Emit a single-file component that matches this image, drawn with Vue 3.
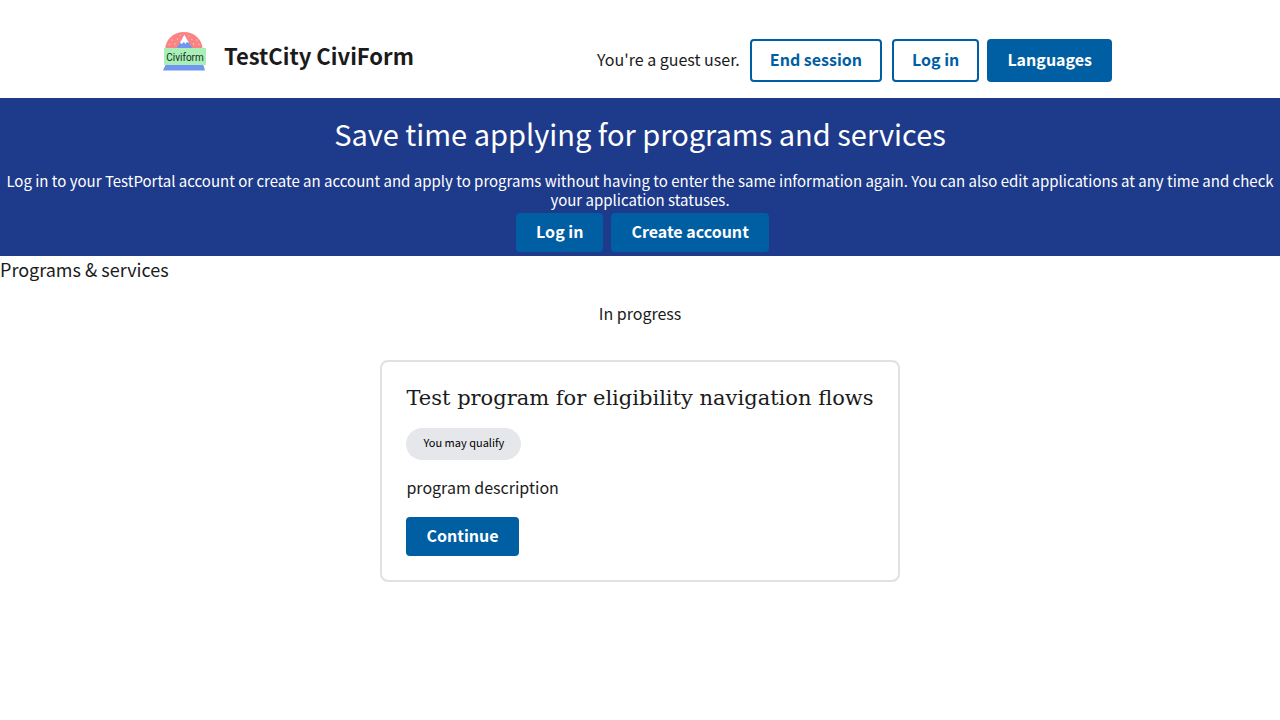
<script setup>
const programs = [
  {
    title: 'Test program for eligibility navigation flows',
    tag: 'You may qualify',
    description: 'program description',
  },
]
</script>

<template>
  <div class="page">
    <header class="header">
      <div class="brand">
        <svg class="logo" viewBox="0 0 44 40" role="img" aria-label="Civiform">
          <path d="M2.3 17a18.6 17 0 0 1 37.2 0z" fill="#fb8383" />
          <g fill="#fdcaca">
            <circle cx="6.5" cy="12.5" r=".7" />
            <circle cx="9" cy="8" r=".7" />
            <circle cx="12" cy="12" r=".7" />
            <circle cx="14.5" cy="7" r=".7" />
            <circle cx="17" cy="3.5" r=".6" />
            <circle cx="26" cy="4" r=".6" />
            <circle cx="29" cy="7.5" r=".7" />
            <circle cx="30.500" cy="12" r=".7" />
            <circle cx="34" cy="8" r=".7" />
            <circle cx="36" cy="12.5" r=".7" />
          </g>
          <path d="M13 17 21.3 3.5 30 17z" fill="#7096ef" />
          <path d="m21.3 2.7 4.7 8-2.200-.7-1.300 2-1.700-2-2 2-1.800-1.300z" fill="#fff" />
          <path d="M3 32h37l2 6.5H0z" fill="#7096ef" />
          <rect x="1" y="16" width="42" height="17" fill="#a8f0b8" />
          <text x="22" y="29" text-anchor="middle">Civiform</text>
        </svg>
        <span class="name">TestCity CiviForm</span>
      </div>
      <nav class="account" aria-label="Account">
        <span class="guest">You're a guest user.</span>
        <a class="button outline" href="#">End session</a>
        <div class="actions">
          <a class="button outline" href="#">Log in</a>
          <button class="button tall" type="button">Languages</button>
        </div>
      </nav>
    </header>

    <section class="banner">
      <h1>Save time applying for programs and services</h1>
      <p>
        Log in to your TestPortal account or create an account and apply to programs without having to enter the same information again. You can also edit applications at any time and check your application statuses.
      </p>
      <div class="actions centered">
        <button class="button" type="button">Log in</button>
        <button class="button" type="button">Create account</button>
      </div>
    </section>

    <main>
      <h2 class="section-title">Programs &amp; services</h2>
      <h3 class="group-title">In progress</h3>
      <ul class="cards">
        <li v-for="program in programs" :key="program.title" class="card">
          <h4>{{ program.title }}</h4>
          <span class="tag">{{ program.tag }}</span>
          <p>{{ program.description }}</p>
          <a class="button" href="#">Continue</a>
        </li>
      </ul>
    </main>
  </div>
</template>

<style>
body {
  margin: 0;
  background: #fff;
}
</style>

<style scoped>
.page {
  color: #1b1b1b;
  font-family: "Noto Sans CJK SC", "Noto Sans", sans-serif;
  font-size: 16px;
  line-height: 20px;
}
h1, h2, h3, h4, p, ul {
  margin: 0;
  padding: 0;
  font-weight: 400;
}
.header {
  box-sizing: border-box;
  display: flex;
  justify-content: space-between;
  align-items: flex-start;
  max-width: 1024px;
  margin: 0 auto;
  padding: 32px 40px 16px 35px;
}
.brand {
  display: flex;
  align-items: flex-start;
  gap: 17px;
}
.logo {
  width: 44px;
  height: 40px;
}
.logo text {
  font-family: Roboto, sans-serif;
  font-size: 10px;
  fill: #172a1c;
}
.name {
  padding-top: 8px;
  font-size: 22px;
  font-weight: 700;
  line-height: 30px;
}
.account {
  display: flex;
  align-items: center;
  gap: 10px;
  padding-top: 7px;
}
.guest {
  padding-bottom: 4px;
}
.actions {
  display: flex;
  gap: 8px;
}
.centered {
  justify-content: center;
  padding: 4px 0 4px 5px;
}
.button {
  box-sizing: border-box;
  display: inline-block;
  min-height: 39px;
  padding: 8px 20px 11px;
  border: 0;
  border-radius: 4px;
  background: #005ea2;
  color: #fff;
  font-family: inherit;
  font-size: 16px;
  font-weight: 700;
  line-height: 20px;
  text-align: center;
  text-decoration: none;
  cursor: pointer;
}
.outline {
  padding: 8px 18px 11px;
  border: 2px solid #005ea2;
  background: transparent;
  color: #005ea2;
}
.tall {
  min-height: 43px;
}
.banner {
  background: #1e3a8a;
  color: #fff;
  text-align: center;
}
.banner h1 {
  padding: 14px 0 17px;
  font-size: 29px;
  line-height: 42px;
}
.banner p {
  font-size: 15px;
  line-height: 19px;
}
.section-title {
  font-size: 18px;
  line-height: 26px;
}
.group-title {
  padding: 17px 0 33px;
  font-size: 16px;
  line-height: 28px;
  text-align: center;
}
.cards {
  display: flex;
  justify-content: center;
  list-style: none;
}
.card {
  display: flex;
  flex-direction: column;
  align-items: flex-start;
  padding: 24px;
  border: 2px solid #dfe1e2;
  border-radius: 8px;
}
.card h4 {
  padding-bottom: 18px;
  font-family: "DejaVu Serif", serif;
  font-size: 21px;
  line-height: 24px;
}
.tag {
  padding: 6px 17px 10px;
  border-radius: 16px;
  background: #e5e7eb;
  color: #000;
  font-size: 11px;
  line-height: 16px;
}
.card p {
  padding: 17px 0 20px;
}
</style>
